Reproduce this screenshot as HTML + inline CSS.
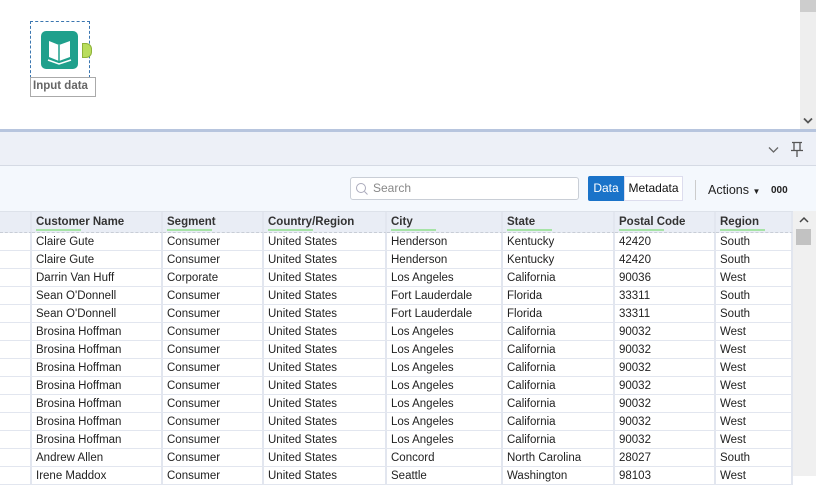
<!DOCTYPE html>
<html><head><style>
*{margin:0;padding:0;box-sizing:border-box}
body{width:816px;height:476px;overflow:hidden;background:#fff;font-family:"Liberation Sans",sans-serif;font-size:11.5px;color:#222;position:relative}
.a{position:absolute}
table{border-collapse:separate;border-spacing:0;position:absolute;left:0;top:212px;background:#e2e6ef}
td,th{height:18px;padding:0 4px;text-align:left;white-space:nowrap;overflow:hidden;border-right:2px solid #e2e6ef;border-bottom:0;}
td{background:#fff;border-top:0;height:18px;line-height:18px;border-bottom:0}
tbody tr td{box-shadow:inset 0 -1px 0 #e2e6ef}
th{background:#e9edf5;font-weight:bold;color:#333;height:19px;line-height:20px;position:relative;border-bottom:1px dashed #c8cdd6}
th span{position:relative}
th span:after{content:"";position:absolute;left:0;bottom:-3px;width:45px;height:2px;background:#a6e3a6}
</style></head><body>
<!-- canvas -->
<div class="a" style="left:800px;top:0;width:16px;height:130px;background:#eeeeee"></div>
<div class="a" style="left:800px;top:0;width:16px;height:12px;background:#cdcdcd"></div>
<svg class="a" style="left:803px;top:117px" width="10" height="8"><path d="M1 1.5L5 5.5L9 1.5" stroke="#555" stroke-width="1.8" fill="none"/></svg>
<div class="a" style="left:30px;top:21px;width:60px;height:57px;border:1px dashed #3b76b0"></div>
<div class="a" style="left:41px;top:31px;width:37px;height:38px;background:#1fa08c;border-radius:5px"></div>
<svg class="a" style="left:41px;top:31px" width="37" height="38" viewBox="0 0 37 38"><path d="M8 10 L18 14 L29 10 L29 26 L18 30 L8 26 Z" fill="#fff"/><path d="M18 14 V30" stroke="#1fa08c" stroke-width="1.5"/><path d="M7 29 L18 33 L30 29" stroke="#fff" fill="none" stroke-width="1.5"/></svg>
<div class="a" style="left:82px;top:43px;width:10px;height:15px;background:#b9dd5d;border:1px solid #8fb33a;border-radius:0 6px 6px 0"></div>
<div class="a" style="left:30px;top:77px;width:66px;height:20px;border:1px solid #aaa;background:#fff;font-size:11.5px;font-weight:bold;color:#666;padding:2px 2px 0">Input data</div>
<!-- divider -->
<div class="a" style="left:0;top:129px;width:816px;height:3px;background:#b7c5de"></div>
<div class="a" style="left:0;top:132px;width:816px;height:34px;background:#edf0f7;border-bottom:1px solid #d5dae4"></div>
<svg class="a" style="left:768px;top:146px" width="11" height="8"><path d="M1 1.5L5.5 6L10 1.5" stroke="#666" stroke-width="1.3" fill="none"/></svg>
<svg class="a" style="left:790px;top:141px" width="14" height="17" viewBox="0 0 14 17"><path d="M2 1.5H12M4 1.5V9M10 1.5V9M1 9.5H13M7 9.5V16" stroke="#555" stroke-width="1.3" fill="none"/></svg>
<!-- toolbar -->
<div class="a" style="left:0;top:166px;width:816px;height:46px;background:#f4f8fd"></div>
<div class="a" style="left:350px;top:177px;width:229px;height:23px;background:#fff;border:1px solid #c9ced6;border-radius:3px;color:#888;font-size:12px;line-height:21px;padding-left:22px">Search</div>
<svg class="a" style="left:355px;top:182px" width="14" height="14"><circle cx="6" cy="6" r="4.5" stroke="#aab" fill="none"/><path d="M9.5 9.5L12.5 12.5" stroke="#aab"/></svg>
<div class="a" style="left:588px;top:176px;width:36px;height:25px;background:#1a73c9;color:#fff;line-height:25px;text-align:center;border-radius:2px 0 0 2px;font-size:12px">Data</div>
<div class="a" style="left:624px;top:176px;width:59px;height:25px;background:#fff;border:1px solid #dde;line-height:23px;text-align:center;font-size:12px;color:#111">Metadata</div>
<div class="a" style="left:695px;top:180px;width:1px;height:20px;background:#ccc"></div>
<div class="a" style="left:708px;top:183px;font-size:12.5px;color:#222">Actions <span style="font-size:8px">&#9660;</span></div>
<div class="a" style="left:771px;top:185px;font-size:10px;font-weight:bold">000</div>
<!-- table -->
<table>
<thead><tr><th style="width:32px"></th><th style="width:131px"><span>Customer Name</span></th><th style="width:101px"><span>Segment</span></th><th style="width:123px"><span>Country/Region</span></th><th style="width:116px"><span>City</span></th><th style="width:112px"><span>State</span></th><th style="width:101px"><span>Postal Code</span></th><th style="width:77px"><span>Region</span></th></tr></thead>
<tbody>
<tr><td></td><td>Claire Gute</td><td>Consumer</td><td>United States</td><td>Henderson</td><td>Kentucky</td><td>42420</td><td>South</td></tr>
<tr><td></td><td>Claire Gute</td><td>Consumer</td><td>United States</td><td>Henderson</td><td>Kentucky</td><td>42420</td><td>South</td></tr>
<tr><td></td><td>Darrin Van Huff</td><td>Corporate</td><td>United States</td><td>Los Angeles</td><td>California</td><td>90036</td><td>West</td></tr>
<tr><td></td><td>Sean O'Donnell</td><td>Consumer</td><td>United States</td><td>Fort Lauderdale</td><td>Florida</td><td>33311</td><td>South</td></tr>
<tr><td></td><td>Sean O'Donnell</td><td>Consumer</td><td>United States</td><td>Fort Lauderdale</td><td>Florida</td><td>33311</td><td>South</td></tr>
<tr><td></td><td>Brosina Hoffman</td><td>Consumer</td><td>United States</td><td>Los Angeles</td><td>California</td><td>90032</td><td>West</td></tr>
<tr><td></td><td>Brosina Hoffman</td><td>Consumer</td><td>United States</td><td>Los Angeles</td><td>California</td><td>90032</td><td>West</td></tr>
<tr><td></td><td>Brosina Hoffman</td><td>Consumer</td><td>United States</td><td>Los Angeles</td><td>California</td><td>90032</td><td>West</td></tr>
<tr><td></td><td>Brosina Hoffman</td><td>Consumer</td><td>United States</td><td>Los Angeles</td><td>California</td><td>90032</td><td>West</td></tr>
<tr><td></td><td>Brosina Hoffman</td><td>Consumer</td><td>United States</td><td>Los Angeles</td><td>California</td><td>90032</td><td>West</td></tr>
<tr><td></td><td>Brosina Hoffman</td><td>Consumer</td><td>United States</td><td>Los Angeles</td><td>California</td><td>90032</td><td>West</td></tr>
<tr><td></td><td>Brosina Hoffman</td><td>Consumer</td><td>United States</td><td>Los Angeles</td><td>California</td><td>90032</td><td>West</td></tr>
<tr><td></td><td>Andrew Allen</td><td>Consumer</td><td>United States</td><td>Concord</td><td>North Carolina</td><td>28027</td><td>South</td></tr>
<tr><td></td><td>Irene Maddox</td><td>Consumer</td><td>United States</td><td>Seattle</td><td>Washington</td><td>98103</td><td>West</td></tr>
</tbody></table>
<div class="a" style="left:0;top:211px;width:793px;height:1px;background:#dde2ea"></div>
<!-- table scrollbar -->
<div class="a" style="left:793px;top:211px;width:23px;height:265px;background:#f0f0f0"></div>
<svg class="a" style="left:799px;top:216px" width="10" height="8"><path d="M1 6L5 2L9 6" stroke="#444" stroke-width="1.5" fill="none"/></svg>
<div class="a" style="left:796px;top:229px;width:15px;height:16px;background:#c2c2c2"></div>
</body></html>
